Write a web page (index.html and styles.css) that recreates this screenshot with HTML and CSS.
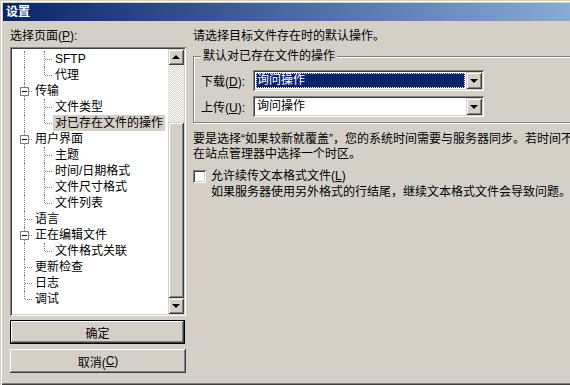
FILE: index.html
```html
<!DOCTYPE html>
<html lang="zh-CN">
<head>
  <meta charset="UTF-8" />
  <title>设置</title>
  <link rel="stylesheet" href="styles.css">
</head>
<body>
  <div class="window">
    <div class="titlebar">设置</div>

    <div class="content">
      <!-- page selector -->
      <div class="left">
        <div class="label">选择页面(<u>P</u>):</div>
        <div class="tree">
          <div class="tree-list">
            <div class="row"><span class="g pipe"></span><span class="g tee"></span><span class="txt">SFTP</span></div>
            <div class="row"><span class="g pipe"></span><span class="g elbow"></span><span class="txt">代理</span></div>
            <div class="row"><span class="g tee"><i class="box"></i></span><span class="txt">传输</span></div>
            <div class="row"><span class="g pipe"></span><span class="g tee"></span><span class="txt">文件类型</span></div>
            <div class="row"><span class="g pipe"></span><span class="g elbow"></span><span class="txt selected">对已存在文件的操作</span></div>
            <div class="row"><span class="g tee"><i class="box"></i></span><span class="txt">用户界面</span></div>
            <div class="row"><span class="g pipe"></span><span class="g tee"></span><span class="txt">主题</span></div>
            <div class="row"><span class="g pipe"></span><span class="g tee"></span><span class="txt">时间/日期格式</span></div>
            <div class="row"><span class="g pipe"></span><span class="g tee"></span><span class="txt">文件尺寸格式</span></div>
            <div class="row"><span class="g pipe"></span><span class="g elbow"></span><span class="txt">文件列表</span></div>
            <div class="row"><span class="g tee"></span><span class="txt">语言</span></div>
            <div class="row"><span class="g tee"><i class="box"></i></span><span class="txt">正在编辑文件</span></div>
            <div class="row"><span class="g pipe"></span><span class="g elbow"></span><span class="txt">文件格式关联</span></div>
            <div class="row"><span class="g tee"></span><span class="txt">更新检查</span></div>
            <div class="row"><span class="g tee"></span><span class="txt">日志</span></div>
            <div class="row"><span class="g elbow"></span><span class="txt">调试</span></div>
          </div>
          <div class="scrollbar">
            <div class="sb-btn"><span class="arrow up"></span></div>
            <div class="sb-track"></div>
            <div class="sb-thumb"></div>
            <div class="sb-btn"><span class="arrow down"></span></div>
          </div>
        </div>
        <button class="btn default">确定</button>
        <button class="btn">取消(<u>C</u>)</button>
      </div>

      <!-- page: existing files -->
      <div class="right">
        <div class="label">请选择目标文件存在时的默认操作。</div>
        <fieldset class="group">
          <legend>默认对已存在文件的操作</legend>
          <div class="combo-row">
            <span class="combo-label">下载(<u>D</u>):</span>
            <div class="combo">
              <div class="combo-value focused">询问操作</div>
              <div class="combo-btn"><span class="arrow down"></span></div>
            </div>
          </div>
          <div class="combo-row">
            <span class="combo-label">上传(<u>U</u>):</span>
            <div class="combo">
              <div class="combo-value">询问操作</div>
              <div class="combo-btn"><span class="arrow down"></span></div>
            </div>
          </div>
        </fieldset>
        <p class="note">要是选择“如果较新就覆盖”，您的系统时间需要与服务器同步。若时间不同，请<br>在站点管理器中选择一个时区。</p>
        <div class="check-row">
          <span class="checkbox"></span>
          <span class="check-label">允许续传文本格式文件(<u>L</u>)</span>
        </div>
        <div class="check-help">如果服务器使用另外格式的行结尾，继续文本格式文件会导致问题。</div>
      </div>
    </div>
  </div>
</body>
</html>
```

FILE: styles.css
```css
body {
  margin: 0;
  font-family: "Liberation Sans", "Noto Sans CJK SC", sans-serif;
  font-size: 12px;
  color: #000;
  background: #d4d0c8;
}
u {
  text-decoration: underline;
}
.window {
  width: 570px;
  height: 385px;
  box-sizing: border-box;
  padding: 3px 0 0 3px;
  overflow: hidden;
  background: #d4d0c8;
  box-shadow: inset 1px 1px 0 #d4d0c8, inset 2px 2px 0 #fff, inset 0 -1px 0 #404040, inset 0 -2px 0 #808080;
}
.titlebar {
  height: 18px;
  line-height: 18px;
  padding-left: 3px;
  color: #fff;
  font-weight: bold;
  background: linear-gradient(to right, #0a246a, #a6caf0) 0 0 / 700px 100% no-repeat;
}
.content {
  display: flex;
  gap: 7px;
  padding: 8px 0 0 7px;
}
.label {
  line-height: 15px;
  white-space: nowrap;
}

/* left column */
.left {
  width: 176px;
  flex: none;
}
.tree {
  display: flex;
  height: 269px;
  margin-top: 3px;
  padding: 2px;
  box-sizing: border-box;
  background: #fff;
  box-shadow: inset 1px 1px 0 #808080, inset -1px -1px 0 #fff, inset 2px 2px 0 #404040, inset -2px -2px 0 #d4d0c8;
}
.tree-list {
  flex: 1;
  overflow: hidden;
  padding-top: 2px;
}
.row {
  display: flex;
  height: 16px;
  line-height: 16px;
  white-space: nowrap;
}
.g {
  position: relative;
  width: 20px;
  height: 16px;
  flex: none;
}
.pipe::before, .tee::before, .elbow::before {
  content: '';
  position: absolute;
  left: 12px;
  top: 0;
  bottom: 0;
  border-left: 1px dotted #808080;
}
.elbow::before {
  bottom: 8px;
}
.tee::after, .elbow::after {
  content: '';
  position: absolute;
  left: 13px;
  top: 8px;
  width: 7px;
  border-top: 1px dotted #808080;
}
.box {
  position: absolute;
  left: 8px;
  top: 4px;
  width: 7px;
  height: 7px;
  border: 1px solid #808080;
  background: #fff;
  z-index: 1;
}
.box::after {
  content: '';
  position: absolute;
  left: 1px;
  top: 3px;
  width: 5px;
  border-top: 1px solid #000;
}
.txt {
  margin-left: 1px;
  padding: 0 2px;
}
.txt.selected {
  background: #d4d0c8;
}
.scrollbar {
  width: 16px;
  flex: none;
  display: flex;
  flex-direction: column;
}
.sb-btn, .sb-thumb, .combo-btn {
  background: #d4d0c8;
  box-shadow: inset 1px 1px 0 #d4d0c8, inset -1px -1px 0 #404040, inset 2px 2px 0 #fff, inset -2px -2px 0 #808080;
}
.sb-btn {
  height: 16px;
  display: flex;
  align-items: center;
  justify-content: center;
}
.sb-track {
  height: 57px;
  background: conic-gradient(#fff 25%, #d4d0c8 0 50%, #fff 0 75%, #d4d0c8 0) 0 0 / 2px 2px;
}
.sb-thumb {
  flex: 1;
}
.arrow {
  width: 0;
  height: 0;
  border-left: 4px solid transparent;
  border-right: 4px solid transparent;
}
.arrow.up {
  border-bottom: 4px solid #000;
}
.arrow.down {
  border-top: 4px solid #000;
}
.btn {
  display: flex;
  align-items: center;
  justify-content: center;
  width: 176px;
  height: 24px;
  margin-top: 4px;
  padding: 0;
  border: none;
  font: inherit;
  color: #000;
  background: #d4d0c8;
  box-shadow: inset -1px -1px 0 #404040, inset 1px 1px 0 #fff, inset -2px -2px 0 #808080, inset 2px 2px 0 #d4d0c8;
}
.btn.default {
  width: 175px;
  box-shadow: inset 0 0 0 1px #000, inset -2px -2px 0 #404040, inset 2px 2px 0 #fff, inset -3px -3px 0 #808080;
}
.btn + .btn {
  margin-top: 5px;
}

/* right column */
.right {
  width: 420px;
  flex: none;
  white-space: nowrap;
}
.group {
  margin: 5px 0 0;
  padding: 6px 7px 5px;
  border: 1px solid #808080;
  box-shadow: 1px 1px 0 #fff, inset 1px 1px 0 #fff;
}
.group legend {
  padding: 0 2px;
  line-height: 15px;
  background: #d4d0c8;
}
.combo-row {
  display: flex;
  align-items: center;
  height: 21px;
}
.combo-row + .combo-row {
  margin-top: 5px;
}
.combo-label {
  width: 52px;
  flex: none;
}
.combo {
  display: flex;
  width: 231px;
  height: 21px;
  box-sizing: border-box;
  padding: 2px;
  background: #fff;
  box-shadow: inset 1px 1px 0 #808080, inset -1px -1px 0 #fff, inset 2px 2px 0 #404040, inset -2px -2px 0 #d4d0c8;
}
.combo-value {
  flex: 1;
  margin: 1px;
  padding-left: 1px;
  line-height: 15px;
}
.combo-value.focused {
  color: #fff;
  background: #0a246a;
  outline: 1px dotted #ffd;
  outline-offset: -1px;
}
.combo-btn {
  width: 16px;
  flex: none;
  display: flex;
  align-items: center;
  justify-content: center;
}
.note {
  margin: 9px 0 0;
  line-height: 15px;
}
.check-row {
  display: flex;
  align-items: center;
  height: 15px;
  margin-top: 7px;
}
.checkbox {
  width: 13px;
  height: 13px;
  box-sizing: border-box;
  background: #fff;
  box-shadow: inset 1px 1px 0 #808080, inset -1px -1px 0 #fff, inset 2px 2px 0 #404040, inset -2px -2px 0 #d4d0c8;
}
.check-label {
  margin-left: 5px;
  line-height: 15px;
}
.check-help {
  margin: 1px 0 0 18px;
  line-height: 15px;
}
```
